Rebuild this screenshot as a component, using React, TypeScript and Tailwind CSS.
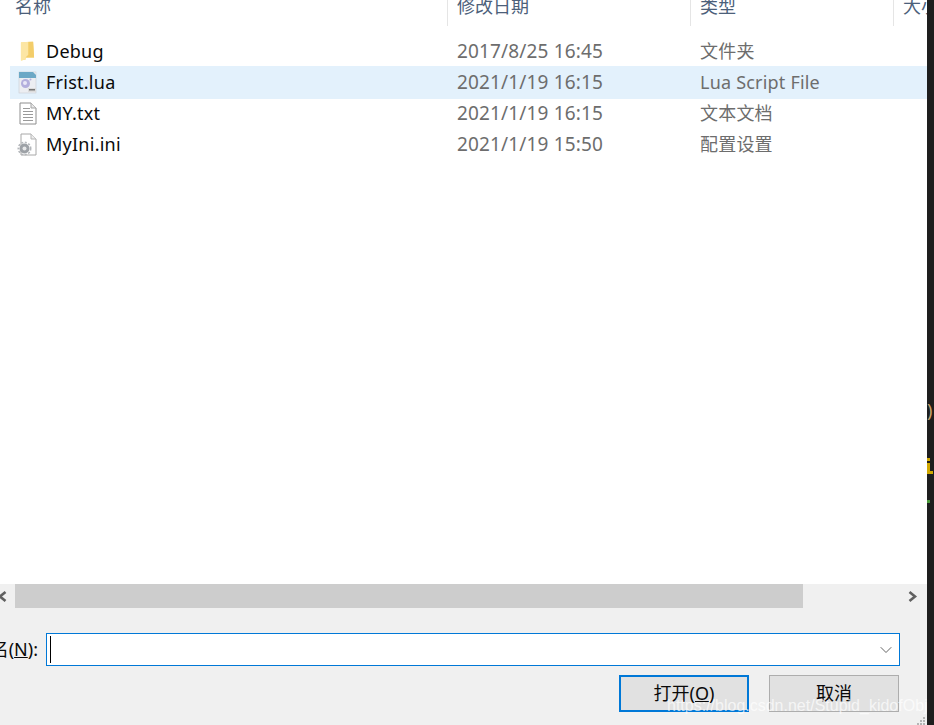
import { ChevronDown } from "lucide-react";

const sans = "font-['Noto_Sans','Noto_Sans_CJK_SC',sans-serif]";

const FolderIcon = () => (
  <svg width="15" height="22" viewBox="0 0 16 22">
    <path d="M1 2 L14 1 L15 18 L6 18 L6 20 L1 21 Z" fill="#f8d775" />
    <path d="M1 2 L9 1 L9 15 L6 18 L6 20 L1 21 Z" fill="#fce6a4" />
    <path d="M9 1 L14 1 L15 18 L6 18 L9 15 Z" fill="#f3cd6a" />
  </svg>
);

const LuaIcon = () => (
  <svg width="20" height="23" viewBox="0 0 20 23">
    <rect x="1" y="1" width="17" height="21" fill="#eceef2" stroke="#c9ccd2" strokeWidth="0.6" />
    <path d="M1 1 H15 L18 4 V7 H1 Z" fill="#6ba8c6" />
    <circle cx="7.5" cy="12.5" r="4.5" fill="#b3afdd" />
    <circle cx="7" cy="12" r="2" fill="#e9e8f7" />
    <circle cx="12.5" cy="8.5" r="1" fill="#b3afdd" />
    <rect x="10" y="17" width="8" height="4" fill="#dcdcdc" />
    <rect x="11" y="18" width="6" height="1.5" fill="#777" />
  </svg>
);

const TextIcon = () => (
  <svg width="18" height="23" viewBox="0 0 18 23">
    <path d="M1 1 H12 L17 6 V22 H1 Z" fill="#fff" stroke="#8e8e8e" />
    <path d="M12 1 V6 H17" fill="#e8e8e8" stroke="#a5a5a5" />
    <path d="M4 6.5 H11 M4 9.5 H14 M4 12.5 H14 M4 15.5 H14 M4 18.5 H14" stroke="#9a9a9a" strokeWidth="1" />
  </svg>
);

const IniIcon = () => (
  <svg width="21" height="23" viewBox="0 0 21 23">
    <path d="M4 1 H14 L19 6 V22 H4 Z" fill="#fff" stroke="#a8a8a8" />
    <path d="M14 1 V6 H19" fill="#ececec" stroke="#b5b5b5" />
    <circle cx="7.5" cy="15.5" r="5" fill="#9da1a6" />
    <circle cx="7.5" cy="15.5" r="6.2" fill="none" stroke="#b4b7bb" strokeWidth="1.6" strokeDasharray="2 1.6" />
    <circle cx="7.5" cy="15.5" r="2" fill="#e6e7e8" />
  </svg>
);

// thick scrollbar arrows
const ArrowLeft = () => (
  <svg width="10" height="11" viewBox="0 0 10 11"><path d="M8.5 1 L3 5.5 L8.5 10" fill="none" stroke="#606060" strokeWidth="2.6" /></svg>
);
const ArrowRight = () => (
  <svg width="10" height="11" viewBox="0 0 10 11"><path d="M1.5 1 L7 5.5 L1.5 10" fill="none" stroke="#606060" strokeWidth="2.6" /></svg>
);

const files = [
  { name: "Debug", date: "2017/8/25 16:45", type: "文件夹", icon: <FolderIcon />, rowClass: "h-[30px]" },
  { name: "Frist.lua", date: "2021/1/19 16:15", type: "Lua Script File", icon: <LuaIcon />, rowClass: "h-[33px] bg-[#e3f1fc]" },
  { name: "MY.txt", date: "2021/1/19 16:15", type: "文本文档", icon: <TextIcon />, rowClass: "h-[29px]" },
  { name: "MyIni.ini", date: "2021/1/19 15:50", type: "配置设置", icon: <IniIcon />, rowClass: "h-[32px]" },
];

export default function App() {
  return (
    <div className={`relative flex h-[725px] w-[934px] overflow-hidden bg-[#1e1e1e] ${sans}`}>
      <div className="flex w-[927px] flex-col bg-white">
        {/* column headers, cut off at the top of the shot */}
        <div className="flex h-[26px] shrink-0 text-[18px] leading-[24px] text-[#4c607a]">
          <div className="w-[447px] pl-[15px]"><span className="-mt-[6px] block">名称</span></div>
          <div className="w-[243px] border-l border-[#e5e5e5] pl-[9px]"><span className="-mt-[6px] block">修改日期</span></div>
          <div className="w-[203px] border-l border-[#e5e5e5] pl-[9px]"><span className="-mt-[6px] block">类型</span></div>
          <div className="flex-1 overflow-hidden border-l border-[#e5e5e5] pl-[9px]"><span className="-mt-[6px] block whitespace-nowrap">大小</span></div>
        </div>

        {/* file rows */}
        <div className="flex-1 pt-[10px] pl-[10px] text-[18px]">
          {files.map((f) => (
            <div key={f.name} className={`flex items-center ${f.rowClass}`}>
              <div className="flex w-[36px] shrink-0 items-center justify-center pr-[1px]">{f.icon}</div>
              <div className="w-[411px] tracking-[0.25px] text-[#0a0a0a]">{f.name}</div>
              <div className="w-[243px] text-[19px] tracking-[0.15px] text-[#6d6d6d]">{f.date}</div>
              <div className="tracking-[0.2px] text-[#6d6d6d]">{f.type}</div>
            </div>
          ))}
        </div>

        {/* bottom pane */}
        <div className="h-[141px] shrink-0 bg-[#f0f0f0]">
          <div className="flex h-[24px] items-center">
            <div className="flex w-[15px] justify-start overflow-hidden">
              <div className="-ml-[3px]"><ArrowLeft /></div>
            </div>
            <div className="h-full w-[788px] bg-[#cdcdcd]" />
            <div className="flex flex-1 justify-end pr-[9px]">
              <ArrowRight />
            </div>
          </div>

          <div className="mt-[25px] flex h-[33px]">
            <div className="flex w-[46px] items-center justify-end overflow-hidden whitespace-nowrap pr-[8px] text-[18px] text-[#0a0a0a]">
              <span>名(<span className="underline">N</span>):</span>
            </div>
            <div className="flex w-[854px] items-center justify-between border border-[#0078d7] bg-white pl-[3px] pr-[3px]">
              <div className="h-[27px] w-px bg-black" />
              <ChevronDown size={20} strokeWidth={1.1} className="text-[#555]" />
            </div>
          </div>

          <div className="mt-[9px] flex h-[37px] justify-end gap-[20px] pr-[28px] text-[18px] text-[#0a0a0a]">
            <button className="w-[130px] border-2 border-[#0078d7] bg-[#e1e1e1]">
              打开(<span className="underline">O</span>)
            </button>
            <button className="w-[130px] border border-[#adadad] bg-[#e1e1e1]">取消</button>
          </div>
        </div>
      </div>

      {/* code editor showing behind the dialog */}
      <div className="absolute left-[927px] top-[398px] text-[18px] leading-[24px] text-[#c9a26d]">)</div>
      <div className="absolute left-[927px] top-[458px] h-[3px] w-[3px] bg-[#d0a800]" />
      <div className="absolute left-[927px] top-[463px] h-[10px] w-[3px] bg-[#d0a800]" />
      <div className="absolute left-[927px] top-[471px] h-[3px] w-[6px] bg-[#d0a800]" />
      <div className="absolute left-[927px] top-[500px] h-[3px] w-[3px] bg-[#4a9a3a]" />

      {/* resize grip */}
      <div className="absolute left-[917px] top-[717px] grid grid-cols-3 gap-px">
        <span /><span /><span className="h-[2px] w-[2px] bg-[#b5b5b5]" />
        <span /><span className="h-[2px] w-[2px] bg-[#b5b5b5]" /><span className="h-[2px] w-[2px] bg-[#b5b5b5]" />
        <span className="h-[2px] w-[2px] bg-[#b5b5b5]" /><span className="h-[2px] w-[2px] bg-[#b5b5b5]" /><span className="h-[2px] w-[2px] bg-[#b5b5b5]" />
      </div>

      {/* watermark */}
      <div className="absolute left-[667px] top-[694px] whitespace-nowrap font-['Liberation_Sans',sans-serif] text-[16px] leading-[24px] text-white/70">
        https://blog.csdn.net/Stupid_kidofObj
      </div>
    </div>
  );
}
